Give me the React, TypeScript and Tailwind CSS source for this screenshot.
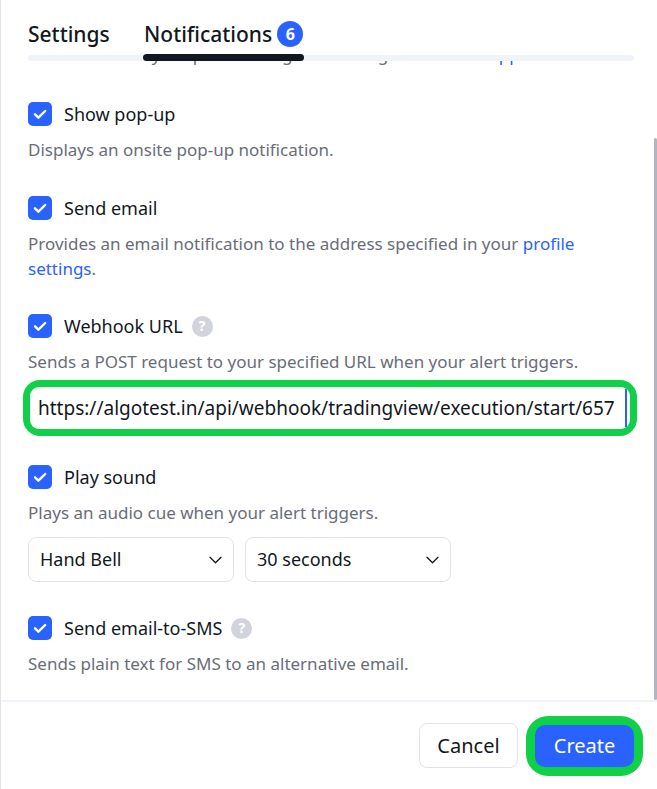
function Check() {
  return (
    <div className="w-6 h-6 shrink-0 rounded-[5px] bg-[#2962ff] flex items-center justify-center">
      <svg width="24" height="24" viewBox="0 0 24 24" fill="none">
        <path d="M7 12.3l3.4 3.4L17.2 9" stroke="white" strokeWidth="2.4" strokeLinecap="round" strokeLinejoin="round" />
      </svg>
    </div>
  );
}

function Help() {
  return (
    <div className="w-[21px] h-[21px] rounded-full bg-[#d1d4dc] flex items-center justify-center text-white text-[14px] font-bold leading-none">
      ?
    </div>
  );
}

function Row({ label, help }: { label: string; help?: boolean }) {
  return (
    <div className="flex items-center h-6">
      <Check />
      <span className="ml-3 text-[18px] leading-6 text-[#131722]">{label}</span>
      {help && (
        <div className="ml-[9px]">
          <Help />
        </div>
      )}
    </div>
  );
}

function Desc({ children }: { children: React.ReactNode }) {
  return <div className="mt-[11px] text-[17px] leading-[25px] text-[#6a6d78]">{children}</div>;
}

function Chevron() {
  return (
    <svg width="13" height="8" viewBox="0 0 13 8" fill="none">
      <path d="M1 1.2l5.5 5.5L12 1.2" stroke="#131722" strokeWidth="1.3" strokeLinecap="round" strokeLinejoin="round" />
    </svg>
  );
}

function Select({ value }: { value: string }) {
  return (
    <div className="w-[206px] h-[45px] rounded-[8px] border border-[#e0e3eb] flex items-center justify-between pl-[11px] pr-[11px]">
      <span className="text-[18px] text-[#131722]">{value}</span>
      <Chevron />
    </div>
  );
}

export default function App() {
  return (
    <div className="relative w-[657px] h-[789px] bg-white border-l border-[#e0e3eb] overflow-hidden flex flex-col font-['Noto_Sans',sans-serif]">
      {/* header */}
      <div className="pl-[27px] pt-[22px] pr-[23px]">
        <div className="flex items-center h-6">
          <span className="w-[116px] text-[21px] leading-6 font-medium text-[#131722]">Settings</span>
          <span className="text-[21px] leading-6 font-medium text-[#131722]">Notifications</span>
          <span className="ml-[5px] w-[26px] h-[26px] rounded-full bg-[#2962ff] text-white text-[16px] font-bold flex items-center justify-center">
            6
          </span>
        </div>
        <div className="relative mt-[9px] h-[6px] rounded-full bg-[#f0f3fa]">
          <div className="absolute left-[115px] -top-px w-[161px] h-[7px] rounded-full bg-[#131722]" />
        </div>
      </div>

      {/* content */}
      <div className="relative flex-1 pl-[27px] pr-[20px]">
        <div className="h-[6px] overflow-hidden">
          <div className="-mt-[17px] text-[17px] leading-[22px] text-[#6a6d78] whitespace-nowrap">
            Get notified on your phone using the TradingView <span className="text-[#2962ff]">mobile app.</span>
          </div>
        </div>

        <div className="mt-[35px]">
          <Row label="Show pop-up" />
          <Desc>Displays an onsite pop-up notification.</Desc>
        </div>

        <div className="mt-[34px]">
          <Row label="Send email" />
          <Desc>
            Provides an email notification to the address specified in your{' '}
            <span className="text-[#2962ff]">profile settings</span>.
          </Desc>
        </div>

        <div className="mt-[33px]">
          <Row label="Webhook URL" help />
          <Desc>Sends a POST request to your specified URL when your alert triggers.</Desc>
          <div className="mt-[6px] -ml-[5px] w-[614px] h-[56px] rounded-[17px] bg-[#10d048] p-[7px]">
            <div className="relative h-full rounded-[9px] bg-white flex items-center pl-[8px] overflow-hidden">
              <span className="text-[19px] text-[#131722] whitespace-nowrap">
                https://algotest.in/api/webhook/tradingview/execution/start/657
              </span>
              <div className="absolute right-[3px] top-[2px] bottom-[2px] w-[2px] bg-[#2962ff]" />
            </div>
          </div>
        </div>

        <div className="mt-[29px]">
          <Row label="Play sound" />
          <Desc>Plays an audio cue when your alert triggers.</Desc>
          <div className="mt-3 flex gap-[11px]">
            <Select value="Hand Bell" />
            <Select value="30 seconds" />
          </div>
        </div>

        <div className="mt-[34px]">
          <Row label="Send email-to-SMS" help />
          <Desc>Sends plain text for SMS to an alternative email.</Desc>
        </div>

        <div className="absolute right-0 top-[77px] bottom-0 w-[3px] bg-[#b2b5be] rounded-sm" />
      </div>

      {/* footer */}
      <div className="h-[89px] shrink-0 border-t-2 border-[#f0f3fa] flex items-center justify-end pr-[14px]">
        <button className="w-[99px] h-[45px] rounded-[8px] border border-[#e0e3eb] bg-white text-[20px] text-[#131722]">
          Cancel
        </button>
        <div className="ml-[8px] p-[9px] rounded-[22px] bg-[#10d048]">
          <button className="w-[99px] h-[42px] rounded-[10px] bg-[#2962ff] text-[20px] text-white">Create</button>
        </div>
      </div>
    </div>
  );
}
